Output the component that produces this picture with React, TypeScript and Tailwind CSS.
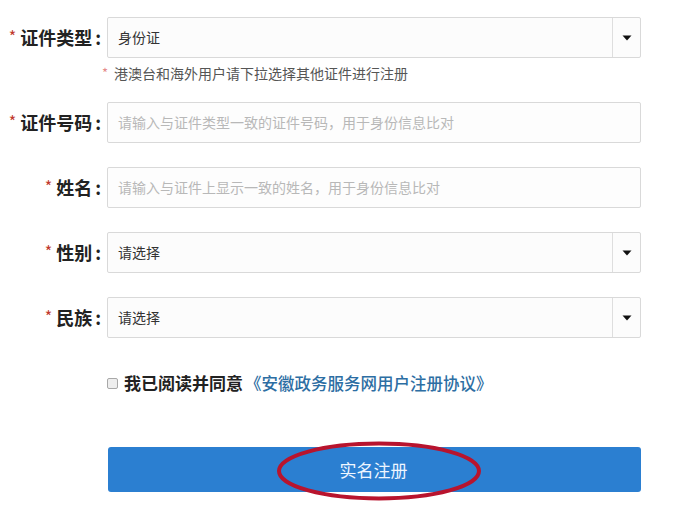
import React from "react";

const font = { fontFamily: '"Noto Sans CJK SC", "Noto Sans", sans-serif' };

function Label({ text }: { text: string }) {
  return (
    <div className="w-[107px] shrink-0 flex items-center justify-end pr-[6px] text-[18px] font-bold text-[#222]">
      <span className="text-[#c0392b] text-[16px] font-normal mr-[4px] relative top-[-2px]">*</span>
      <span>{text}</span>
      <span className="ml-[3px]">:</span>
    </div>
  );
}

function Select({ value }: { value: string }) {
  return (
    <div className="w-[534px] h-[41px] flex border border-[#d9d9d9] rounded-[2px] bg-[#fcfcfc]">
      <div className="flex-1 flex items-center pl-[10px] text-[14px] text-[#333]">{value}</div>
      <div className="w-[28px] border-l border-[#dedede] flex items-center justify-center">
        <svg width="10" height="6" viewBox="0 0 10 6">
          <path d="M0.5 0.5 L9.5 0.5 L5 5.5 Z" fill="#111" />
        </svg>
      </div>
    </div>
  );
}

function Input({ placeholder }: { placeholder: string }) {
  return (
    <div className="w-[534px] h-[41px] flex items-center border border-[#d9d9d9] rounded-[2px] bg-[#fdfdfd] pl-[10px] text-[14px] text-[#b8b8b8]">
      {placeholder}
    </div>
  );
}

export default function App() {
  return (
    <div className="w-[674px] h-[515px] bg-white overflow-hidden" style={font}>
      <div className="pt-[17px] flex flex-col">
        <div className="flex">
          <Label text="证件类型" />
          <Select value="身份证" />
        </div>
        <div className="flex items-center mt-[7px] pl-[102px] text-[14px] text-[#555] h-[16px]">
          <span className="text-[#e58a8a] text-[13px] mr-[6px]">*</span>
          <span>港澳台和海外用户请下拉选择其他证件进行注册</span>
        </div>
        <div className="flex mt-[21px]">
          <Label text="证件号码" />
          <Input placeholder="请输入与证件类型一致的证件号码，用于身份信息比对" />
        </div>
        <div className="flex mt-[24px]">
          <Label text="姓名" />
          <Input placeholder="请输入与证件上显示一致的姓名，用于身份信息比对" />
        </div>
        <div className="flex mt-[24px]">
          <Label text="性别" />
          <Select value="请选择" />
        </div>
        <div className="flex mt-[24px]">
          <Label text="民族" />
          <Select value="请选择" />
        </div>
        <div className="flex items-center mt-[35px] pl-[107px] h-[20px]">
          <span className="w-[11px] h-[11px] border border-[#a8a8a8] rounded-[2px] bg-[#eeeeee] mr-[6px]" />
          <span className="text-[17px] font-bold text-[#222]">我已阅读并同意</span>
          <span className="text-[16.5px] text-[#2d6ea3] font-medium ml-[2px]">《安徽政务服务网用户注册协议》</span>
        </div>
        <div className="mt-[54px] ml-[108px] relative w-[533px] h-[45px] bg-[#2b7fd1] rounded-[3px] flex items-center justify-center">
          <span className="text-[17px] text-[#eef6ff] relative left-[-1px]">实名注册</span>
          <svg className="absolute left-[168px] top-[-6px]" width="206" height="60" viewBox="0 0 206 60">
            <ellipse cx="103" cy="30" rx="100" ry="27.5" fill="none" stroke="#b8142e" strokeWidth="4" />
          </svg>
        </div>
      </div>
    </div>
  );
}
